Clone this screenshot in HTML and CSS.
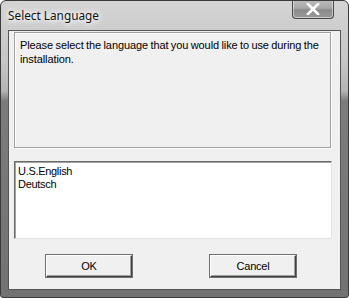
FILE: index.html
```html
<!DOCTYPE html>
<html>
<head>
<meta charset="utf-8">
<link rel="stylesheet" href="styles.css">
</head>
<body>
<div class="window">
  <div class="titlebar">
    <span class="title">Select Language</span>
    <div class="close">
      <svg width="16" height="12" viewBox="0 0 16 12"><path d="M3 1 L13 11 M13 1 L3 11" stroke="#ffffff" stroke-width="2.6" stroke-linecap="square"/></svg>
    </div>
  </div>
  <div class="client">
    <div class="panel">
      <p class="prompt">Please select the language that you would like to use during the installation.</p>
    </div>
    <div class="listbox">
      <div class="item">U.S.English</div>
      <div class="item">Deutsch</div>
    </div>
    <div class="buttons">
      <button class="btn">OK</button>
      <button class="btn">Cancel</button>
    </div>
  </div>
</div>
</body>
</html>
```
FILE: styles.css
```css
html, body {
  margin: 0;
  padding: 0;
  background: #ffffff;
}
.window {
  width: 349px;
  height: 298px;
  box-sizing: border-box;
  border: 1px solid #3a3a3a;
  border-radius: 6px 6px 3px 3px;
  background: linear-gradient(to bottom, #d4d4d4 0px, #c6c6c6 60px, #b4b4b4 90px, #7c7c7c 100px, #727272 298px);
  display: flex;
  flex-direction: column;
  position: relative;
  overflow: hidden;
}
.titlebar {
  height: 29px;
  flex: none;
  display: flex;
  align-items: flex-start;
  position: relative;
}
.title {
  font-family: "Noto Sans", "DejaVu Sans", sans-serif;
  font-size: 11.8px;
  color: #111;
  margin: 6px 0 0 7px;
  text-shadow: 0 0 8px #ffffff, 0 0 6px #ffffff, 0 0 4px #ffffff;
}
.close {
  position: absolute;
  left: 291px;
  top: -1px;
  width: 42px;
  height: 19px;
  box-sizing: border-box;
  border: 1px solid #4a4a4a;
  border-top: none;
  border-radius: 0 0 4px 4px;
  background: linear-gradient(to bottom, #bcbcbc 0%, #a8a8a8 45%, #8a8a8a 55%, #9a9a9a 100%);
  box-shadow: inset 0 0 0 1px rgba(255,255,255,0.45);
  display: flex;
  align-items: center;
  justify-content: center;
}
.client {
  flex: 1;
  margin: 0 7px 7px 7px;
  border: 1px solid #555;
  background: #f0f0f0;
  display: flex;
  flex-direction: column;
  padding: 1px 4px 0 5px;
  font-family: "Liberation Sans", Arial, sans-serif;
  font-size: 11px;
  letter-spacing: -0.3px;
  color: #000;
}
.panel {
  height: 116px;
  border: 1px solid #a0a0a0;
  box-shadow: 1px 1px 0 #ffffff, inset 1px 1px 0 #ffffff;
  width: 317px;
  box-sizing: border-box;
}
.prompt {
  margin: 5px 0 0 5px;
  line-height: 14px;
  width: 310px;
  letter-spacing: -0.1px;
  word-spacing: -0.5px;
}
.listbox {
  margin-top: 13px;
  width: 318px;
  height: 78px;
  box-sizing: border-box;
  background: #ffffff;
  border-top: 1px solid #6a6a6a;
  border-left: 1px solid #6a6a6a;
  border-right: 1px solid #e3e3e3;
  border-bottom: 1px solid #e3e3e3;
  box-shadow: inset 1px 1px 0 #a0a0a0;
  padding: 3px 0 0 3px;
}
.item {
  line-height: 13px;
}
.buttons {
  display: flex;
  margin-top: 16px;
  padding-left: 32px;
  gap: 78px;
}
.btn {
  width: 86px;
  height: 22px;
  box-sizing: border-box;
  font-family: "Liberation Sans", Arial, sans-serif;
  font-size: 11px;
  letter-spacing: -0.2px;
  color: #000;
  background: #f0f0f0;
  border-top: 1px solid #ffffff;
  border-left: 1px solid #ffffff;
  border-right: 1px solid #404040;
  border-bottom: 1px solid #404040;
  box-shadow: inset -1px -1px 0 #a0a0a0;
  outline: 1px solid #707070;
  padding: 0;
}
```
